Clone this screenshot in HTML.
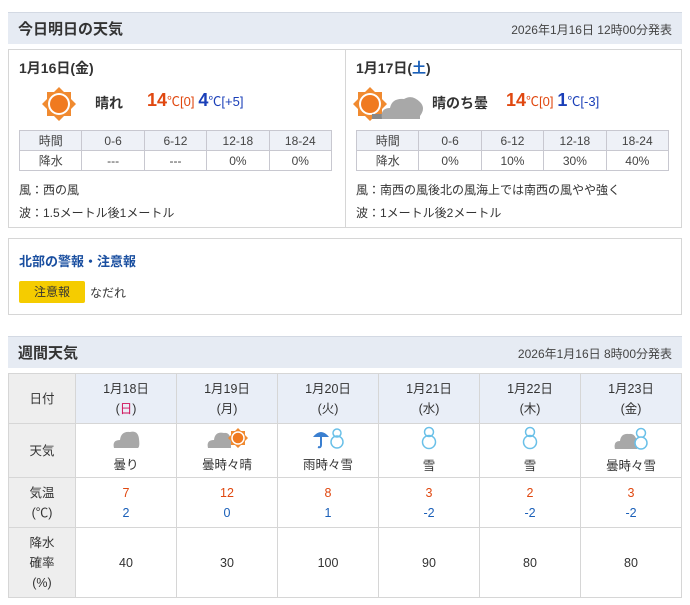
<!DOCTYPE html>
<html><head><meta charset="utf-8"><style>
*{margin:0;padding:0;box-sizing:border-box}
body{width:690px;height:605px;background:#fff;font-family:"Liberation Sans","Noto Sans CJK JP",sans-serif;color:#333;font-size:13px;position:relative;overflow:hidden}
.hb{position:absolute;left:8px;width:674px;height:32px;background:#e6ebf3;border-top:1px solid #d3d9e3}
.hb h2{position:absolute;left:10px;top:5px;font-size:15px;font-weight:bold;color:#333}
.hb span{position:absolute;right:10px;top:8px;font-size:12px;color:#444}
.box{position:absolute;border:1px solid #d6d6d6;background:#fff}
.day{position:absolute;top:0}
.dt{position:absolute;left:10px;top:8px;font-size:14px;font-weight:bold}
.wx{position:absolute;font-size:14px;font-weight:bold;top:43px}
.hi{color:#e04810;font-weight:bold;font-size:18px}
.lo{color:#1a3fb8;font-weight:bold;font-size:18px}
.sm{font-size:13px;font-weight:normal}
.smr{color:#e04810}.sml{color:#1a3fb8}
table.p{position:absolute;left:10px;top:80px;border-collapse:collapse;font-size:12px;table-layout:fixed}
table.p td{border:1px solid #c8c8d0;height:20px;text-align:center;color:#444;width:62px}
table.p tr:first-child td{background:#eef1f7}
.inf{position:absolute;left:10px;font-size:12px;color:#333}
table.w{position:absolute;left:8px;top:373px;border-collapse:collapse;font-size:12.5px}
table.w td{border:1px solid #d6d6d6;text-align:center;color:#333;line-height:20px}
table.w td.l{background:#eeeeee;width:67px}
table.w tr:first-child td{background:#e9eef7}
table.w tr:first-child td.l{background:#eeeeee}
.r{color:#e04810}.b{color:#1a5fb8}
</style></head><body>
<div class="hb" style="top:12px"><h2>今日明日の天気</h2><span>2026年1月16日 12時00分発表</span></div>
<div class="box" style="left:8px;top:49px;width:674px;height:179px">
 <div class="day" style="left:0;width:336px;height:177px">
  <div class="dt">1月16日(金)</div>
  <svg style="position:absolute;left:32px;top:36px" width="36" height="36" viewBox="0 0 36 36"><polygon points="18,1 23,6 30,6 30,13 35,18 30,23 30,30 23,30 18,35 13,30 6,30 6,23 1,18 6,13 6,6 13,6" fill="#f08a30"/><circle cx="18" cy="18" r="11" fill="#fff"/><circle cx="18" cy="18" r="9" fill="#f07a20"/></svg>
  <div class="wx" style="left:86px">晴れ</div>
  <div class="wx" style="left:138px;top:40px"><span class="hi">14</span><span class="sm smr">℃[0]</span> <span class="lo">4</span><span class="sm sml">℃[+5]</span></div>
  <table class="p" style="width:313px"><tr><td>時間</td><td>0-6</td><td>6-12</td><td>12-18</td><td>18-24</td></tr><tr><td>降水</td><td>---</td><td>---</td><td>0%</td><td>0%</td></tr></table>
  <div class="inf" style="top:131px">風：西の風</div>
  <div class="inf" style="top:154px">波：1.5メートル後1メートル</div>
 </div>
 <div style="position:absolute;left:336px;top:0;width:1px;height:177px;background:#d6d6d6"></div>
 <div class="day" style="left:337px;width:336px;height:177px">
  <div class="dt">1月17日(<span style="color:#1a5fb8">土</span>)</div>
  <svg style="position:absolute;left:6px;top:36px" width="72" height="38" viewBox="0 0 72 38"><polygon points="18,1 23,6 30,6 30,13 35,18 30,23 30,30 23,30 18,35 13,30 6,30 6,23 1,18 6,13 6,6 13,6" fill="#f08a30"/><circle cx="18" cy="18" r="11" fill="#fff"/><circle cx="18" cy="18" r="9" fill="#f07a20"/><rect x="20" y="28" width="14" height="5" fill="#888"/><path d="M30 33 Q28 22 38 22 Q40 12 52 13 Q60 8 68 16 Q74 22 68 30 L68 33 Z" fill="#a8a8a8"/></svg>
  <div class="wx" style="left:86px">晴のち曇</div>
  <div class="wx" style="left:160px;top:40px"><span class="hi">14</span><span class="sm smr">℃[0]</span> <span class="lo">1</span><span class="sm sml">℃[-3]</span></div>
  <table class="p" style="width:313px"><tr><td>時間</td><td>0-6</td><td>6-12</td><td>12-18</td><td>18-24</td></tr><tr><td>降水</td><td>0%</td><td>10%</td><td>30%</td><td>40%</td></tr></table>
  <div class="inf" style="top:131px">風：南西の風後北の風海上では南西の風やや強く</div>
  <div class="inf" style="top:154px">波：1メートル後2メートル</div>
 </div>
</div>
<div class="box" style="left:8px;top:238px;width:674px;height:77px">
 <div style="position:absolute;left:10px;top:12px;font-size:13px;font-weight:bold;color:#1a4fa0">北部の警報・注意報</div>
 <div style="position:absolute;left:10px;top:42px;width:66px;height:22px;background:#f5cc00;border-radius:2px;text-align:center;line-height:22px;font-size:12px;color:#333">注意報</div>
 <div style="position:absolute;left:81px;top:45px;font-size:12px">なだれ</div>
</div>
<div class="hb" style="top:336px"><h2>週間天気</h2><span>2026年1月16日 8時00分発表</span></div>
<table class="w">
<tr style="height:50px"><td class="l">日付</td><td style="width:101px">1月18日<br>(<span style="color:#d0105a">日</span>)</td><td style="width:101px">1月19日<br>(月)</td><td style="width:101px">1月20日<br>(火)</td><td style="width:101px">1月21日<br>(水)</td><td style="width:101px">1月22日<br>(木)</td><td style="width:101px">1月23日<br>(金)</td></tr>
<tr style="height:54px"><td class="l">天気</td>
<td><svg width="28" height="22" viewBox="0 0 28 22"><path d="M2 21 Q0 13 8 13 Q9 4 18 5 Q26 3 27 12 Q28 20 26 21 Z" fill="#a8a8a8"/></svg><br>曇り</td>
<td><svg width="42" height="22" viewBox="0 0 42 22"><path d="M2 21 Q0 13 8 13 Q9 4 18 6 Q24 5 25 14 L25 21 Z" fill="#a8a8a8"/><polygon points="32,1 35,4 39,4 39,8 42,11 39,14 39,18 35,18 32,21 29,18 25,18 25,14 22,11 25,8 25,4 29,4" fill="#f08a30"/><circle cx="32" cy="11" r="6" fill="#f07a20" stroke="#fff" stroke-width="1.5"/></svg><br>曇時々晴</td>
<td><svg width="36" height="22" viewBox="0 0 36 22"><path d="M3 10 Q11 0 19 10 Z" fill="#3a7fd0"/><path d="M11 9 V18 Q11 21 8 20" stroke="#3a7fd0" stroke-width="2" fill="none"/><circle cx="27" cy="6" r="4" fill="none" stroke="#6ac0e8" stroke-width="1.5"/><circle cx="27" cy="15" r="6" fill="none" stroke="#6ac0e8" stroke-width="1.5"/></svg><br>雨時々雪</td>
<td><svg width="16" height="24" viewBox="0 0 16 24"><circle cx="8" cy="6" r="4.5" fill="none" stroke="#6ac0e8" stroke-width="1.5"/><circle cx="8" cy="16" r="6.5" fill="none" stroke="#6ac0e8" stroke-width="1.5"/></svg><br>雪</td>
<td><svg width="16" height="24" viewBox="0 0 16 24"><circle cx="8" cy="6" r="4.5" fill="none" stroke="#6ac0e8" stroke-width="1.5"/><circle cx="8" cy="16" r="6.5" fill="none" stroke="#6ac0e8" stroke-width="1.5"/></svg><br>雪</td>
<td><svg width="36" height="24" viewBox="0 0 36 24"><path d="M2 23 Q0 15 7 15 Q8 7 16 8 Q22 7 24 15 L24 23 Z" fill="#a8a8a8"/><circle cx="28" cy="7" r="4.5" fill="#fff" stroke="#6ac0e8" stroke-width="1.5"/><circle cx="28" cy="17" r="6" fill="#fff" stroke="#6ac0e8" stroke-width="1.5"/></svg><br>曇時々雪</td></tr>
<tr style="height:50px"><td class="l">気温<br>(℃)</td><td><span class="r">7</span><br><span class="b">2</span></td><td><span class="r">12</span><br><span class="b">0</span></td><td><span class="r">8</span><br><span class="b">1</span></td><td><span class="r">3</span><br><span class="b">-2</span></td><td><span class="r">2</span><br><span class="b">-2</span></td><td><span class="r">3</span><br><span class="b">-2</span></td></tr>
<tr style="height:70px"><td class="l">降水<br>確率<br>(%)</td><td>40</td><td>30</td><td>100</td><td>90</td><td>80</td><td>80</td></tr>
</table>
</body></html>
